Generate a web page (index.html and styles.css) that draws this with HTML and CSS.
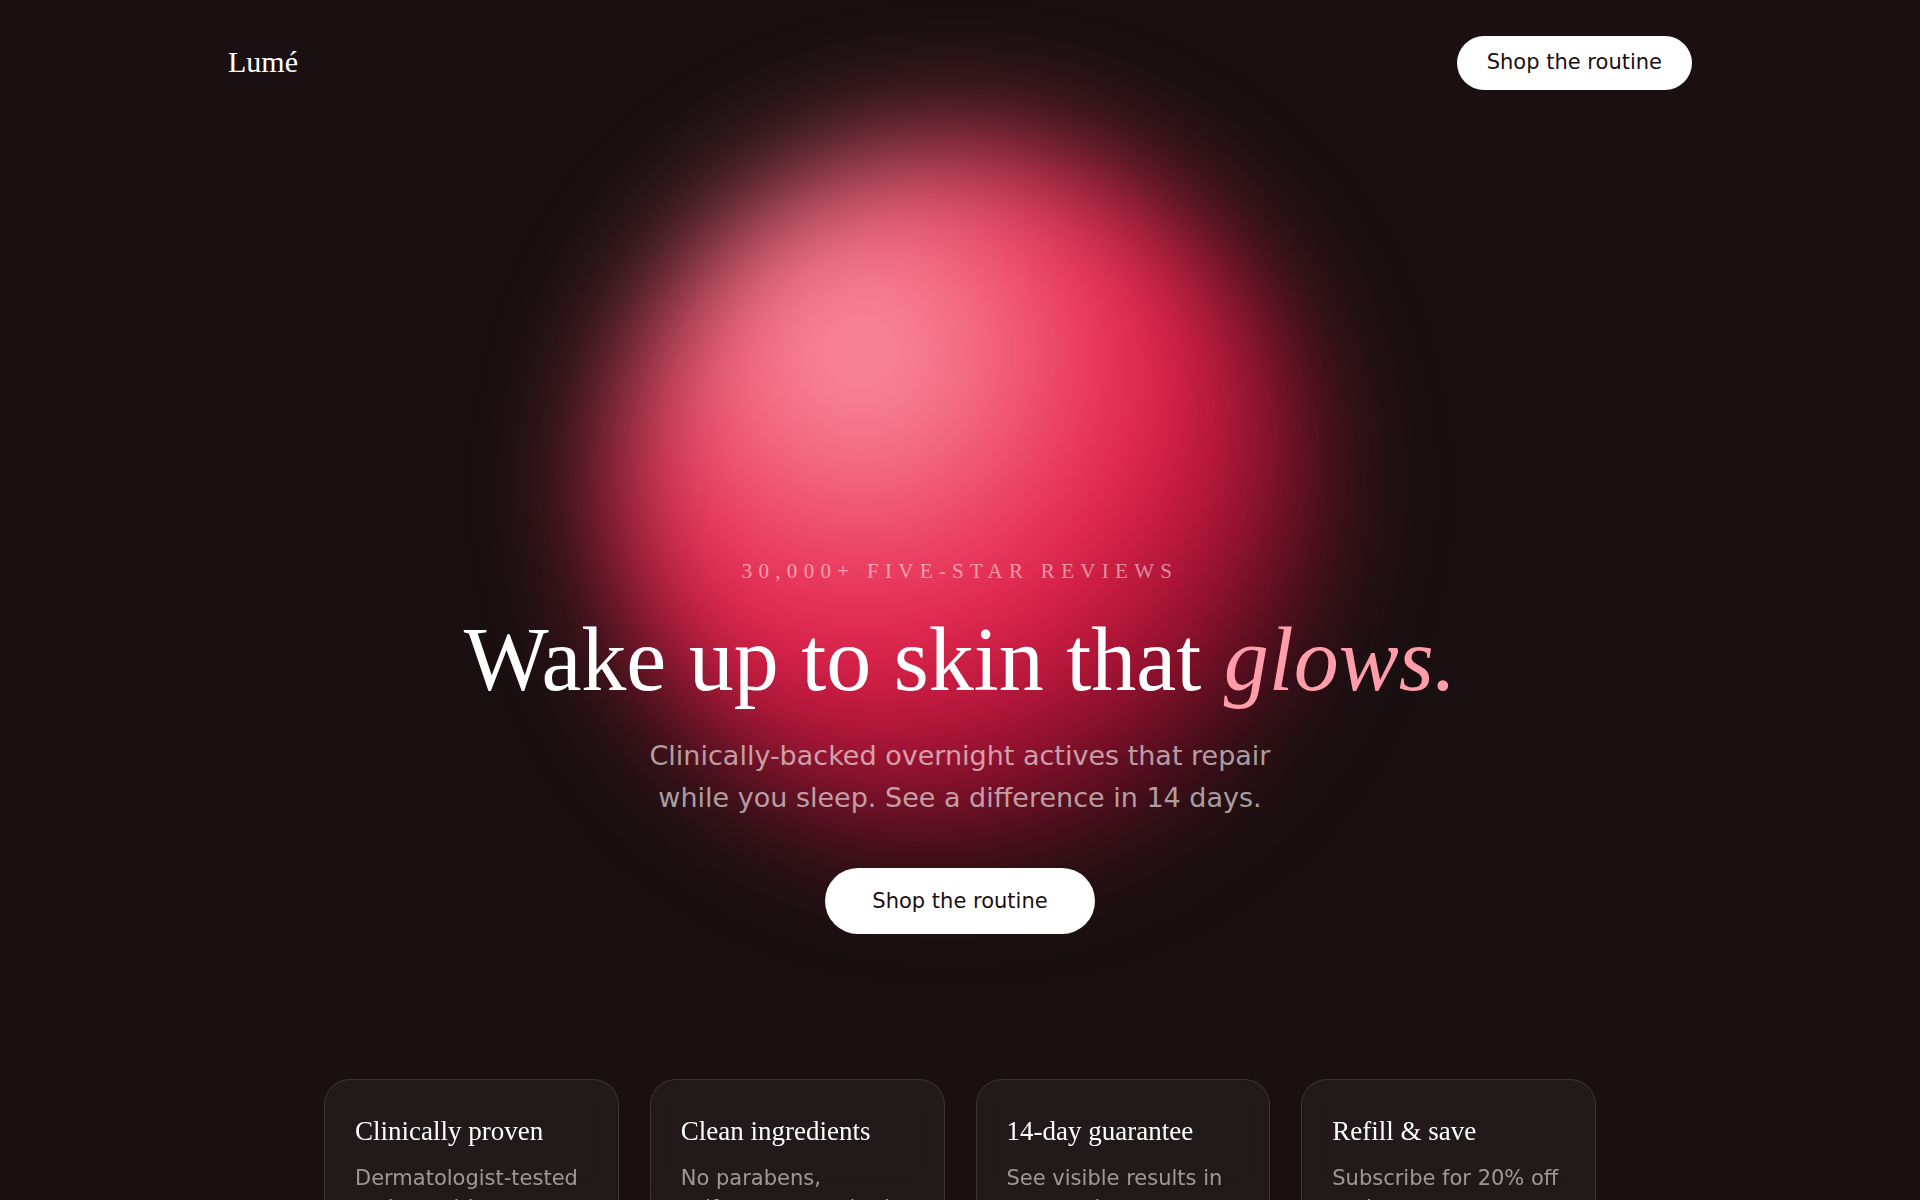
FILE: index.html
```html
<!DOCTYPE html>
<html lang="en">

<head>
	<meta charset="UTF-8">
	<meta name="viewport" content="width=device-width, initial-scale=1.0">
	<title>Lumé</title>
	<link rel="stylesheet" href="styles.css">
</head>

<body>
	<div class="orb" aria-hidden="true"></div>

	<header class="nav">
		<a class="logo" href="#">Lumé</a>
		<button class="btn" type="button">Shop the routine</button>
	</header>

	<main>
		<section class="hero">
			<p class="eyebrow">30,000+ five-star reviews</p>
			<h1>Wake up to skin that <em>glows.</em></h1>
			<p class="lead">Clinically-backed overnight actives that repair while you sleep. See a difference in 14 days.</p>
			<button class="btn btn-large" type="button">Shop the routine</button>
		</section>

		<section class="features">
			<article class="card">
				<h2>Clinically proven</h2>
				<p>Dermatologist-tested actives with proven results.</p>
			</article>
			<article class="card">
				<h2>Clean ingredients</h2>
				<p>No parabens, sulfates, or synthetic fragrance.</p>
			</article>
			<article class="card">
				<h2>14-day guarantee</h2>
				<p>See visible results in two weeks or your money back.</p>
			</article>
			<article class="card">
				<h2>Refill &amp; save</h2>
				<p>Subscribe for 20% off and never run out.</p>
			</article>
		</section>
	</main>
</body>

</html>
```

FILE: styles.css
```css
*,
*::before,
*::after {
	box-sizing: border-box;
}

body {
	position: relative;
	margin: 0;
	overflow-x: hidden;
	background-color: #1a1011;
	color: #fff;
	font-family: "DejaVu Sans", sans-serif;
	font-size: 21px;
}

h1,
h2,
p {
	margin: 0;
}

/* blurred glow behind the hero */
.orb {
	position: absolute;
	z-index: -1;
	top: 138px;
	left: 50%;
	width: 710px;
	height: 710px;
	border-radius: 50%;
	background: radial-gradient(circle at 36% 30%, #fca1ac, #e92a52 40%, #cc1840 52%, #5c0a1e 76%, #1a1011);
	filter: blur(60px);
	transform: translateX(-50%);
}

.nav {
	display: flex;
	align-items: center;
	justify-content: space-between;
	max-width: 1536px;
	margin: 0 auto;
	padding: 36px;
}

.logo {
	padding-bottom: 2px;
	color: #fff;
	font-family: "Liberation Serif", serif;
	font-size: 30px;
	line-height: 32px;
	text-decoration: none;
}

.btn {
	padding: 13px 30px 15px;
	border: 0;
	border-radius: 999px;
	background-color: #fff;
	color: #1a1011;
	font-family: inherit;
	font-size: 21px;
	line-height: 26px;
	cursor: pointer;
}

.btn-large {
	padding: 20px 47px;
}

.hero {
	display: flex;
	flex-direction: column;
	align-items: center;
	padding: 432px 36px 145px;
	text-align: center;
}

.eyebrow {
	color: rgba(255, 255, 255, 0.5);
	font-family: "Liberation Serif", serif;
	font-size: 21px;
	line-height: 26px;
	letter-spacing: 0.3em;
	text-transform: uppercase;
}

h1 {
	margin-top: 26px;
	font-family: "Liberation Serif", serif;
	font-size: 90px;
	font-weight: 400;
	line-height: 100px;
}

h1 em {
	color: #ff9eaa;
}

.lead {
	max-width: 660px;
	margin-top: 25px;
	color: rgba(255, 255, 255, 0.6);
	font-size: 27px;
	line-height: 42px;
}

.hero .btn {
	margin-top: 49px;
}

.features {
	display: grid;
	grid-template-columns: repeat(4, 1fr);
	gap: 31px;
	max-width: 1272px;
	margin: 0 auto;
	padding-bottom: 96px;
}

.card {
	padding: 30px;
	border: 1px solid rgba(255, 255, 255, 0.12);
	border-radius: 26px;
	background-color: rgba(255, 255, 255, 0.04);
	backdrop-filter: blur(12px);
}

.card h2 {
	margin-bottom: 11px;
	font-family: "Liberation Serif", serif;
	font-size: 27px;
	font-weight: 400;
	line-height: 42px;
}

.card p {
	color: rgba(255, 255, 255, 0.55);
	line-height: 30px;
}
```
